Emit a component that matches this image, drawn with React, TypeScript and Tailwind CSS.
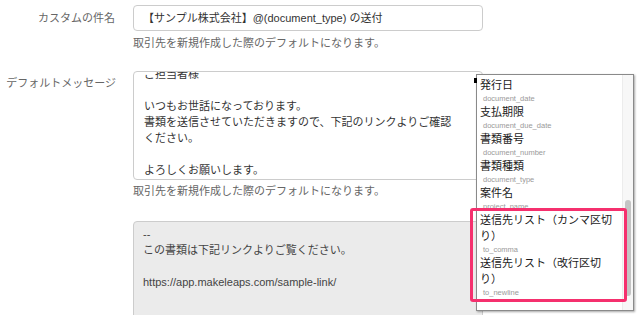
import React from "react";

const FONT = "font-['Liberation_Sans','Noto_Sans_CJK_JP',sans-serif]";

interface Placeholder {
  label: string;
  key: string;
}

const placeholders: Placeholder[] = [
  { label: "発行日", key: "document_date" },
  { label: "支払期限", key: "document_due_date" },
  { label: "書類番号", key: "document_number" },
  { label: "書類種類", key: "document_type" },
  { label: "案件名", key: "project_name" },
  { label: "送信先リスト（カンマ区切り）", key: "to_comma" },
  { label: "送信先リスト（改行区切り）", key: "to_newline" },
];

const messageLines = [
  "ご担当者様",
  "",
  "いつもお世話になっております。",
  "書類を送信させていただきますので、下記のリンクよりご確認",
  "ください。",
  "",
  "よろしくお願いします。",
];

function HelpText({ className = "" }: { className?: string }) {
  return (
    <p className={`leading-[16px] text-[#666] ${className}`}>
      取引先を新規作成した際のデフォルトになります。
    </p>
  );
}

function PlaceholderMenu() {
  return (
    <div className="absolute left-[476px] top-[74px] w-[158px] h-[237px] bg-white border border-[#8a8a8a] shadow-[1px_1px_2px_rgba(0,0,0,0.35)] flex overflow-hidden">
      <div className="flex-1 pl-[3px] pt-[2px]">
        {placeholders.map((p) => (
          <div key={p.key}>
            <div className="w-[134px] text-[11px] leading-[16px] text-[#1a1a1a]">{p.label}</div>
            <div className="pl-[3px] text-[7.5px] leading-[11px] text-[#9a9a9a]">{p.key}</div>
          </div>
        ))}
      </div>
      <div className="w-[11px] bg-[#f7f7f7] border-l border-[#ececec] flex justify-center">
        <div className="mt-[125px] w-[6px] h-[96px] rounded-full bg-[#c4c4c4]" />
      </div>
    </div>
  );
}

export default function App() {
  return (
    <div className={`relative w-[640px] h-[315px] overflow-hidden bg-white text-[11px] text-[#333] ${FONT}`}>
      <div className="pt-[5px]">
        {/* subject */}
        <div className="flex items-start">
          <div className="w-[133px] pr-[18px] text-right leading-[26px] text-[#666]">カスタムの件名</div>
          <div className="w-[350px]">
            <div className="h-[26px] border border-[#cccccc] rounded-[4px] px-[9px] leading-[24px]">
              【サンプル株式会社】@(document_type) の送付
            </div>
            <HelpText className="mt-[4px]" />
          </div>
        </div>

        {/* default message */}
        <div className="flex items-start mt-[20px]">
          <div className="w-[133px] pr-[17px] pt-[4px] text-right leading-[16px] text-[#666]">デフォルトメッセージ</div>
          <div className="w-[350px]">
            <div className="h-[109px] border border-[#cccccc] rounded-[4px] overflow-hidden px-[10px]">
              <div className="mt-[-6px] leading-[16px]">
                {messageLines.map((l, i) => (
                  <div key={i} className="h-[16px] whitespace-nowrap">{l}</div>
                ))}
              </div>
            </div>
            <HelpText className="mt-[3px]" />
            <div className="mt-[22px] h-[110px] border border-[#cccccc] rounded-[4px] bg-[#ebebeb] px-[9px] pt-[4px] leading-[16px] text-[#444]">
              <div>--</div>
              <div>この書類は下記リンクよりご覧ください。</div>
              <div className="h-[16px]" />
              <div>https://app.makeleaps.com/sample-link/</div>
            </div>
          </div>
        </div>
      </div>

      <PlaceholderMenu />
      <div className="absolute left-[474px] top-[78px] w-[3px] h-[5px] bg-black" />
      <div className="absolute left-[470px] top-[208px] w-[157px] h-[94px] border-[3px] border-[#f5306e] rounded-[3px]" />
    </div>
  );
}
